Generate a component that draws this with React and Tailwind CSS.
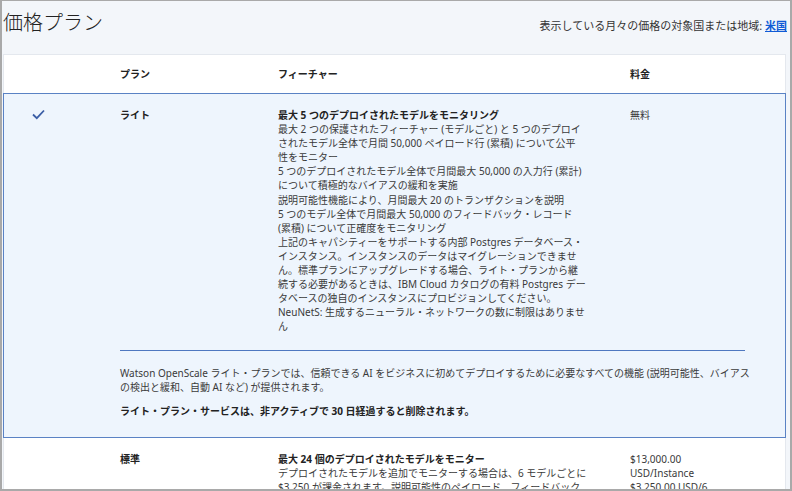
import React from "react";

const features = [
  ["最大 2 つの保護されたフィーチャー (モデルごと) と 5 つのデプロイ", "されたモデル全体で月間 50,000 ペイロード行 (累積) について公平", "性をモニター"],
  ["5 つのデプロイされたモデル全体で月間最大 50,000 の入力行 (累計)", "について積極的なバイアスの緩和を実施"],
  ["説明可能性機能により、月間最大 20 のトランザクションを説明"],
  ["5 つのモデル全体で月間最大 50,000 のフィードバック・レコード", "(累積) について正確度をモニタリング"],
  ["上記のキャパシティーをサポートする内部 Postgres データベース・", "インスタンス。インスタンスのデータはマイグレーションできませ", "ん。標準プランにアップグレードする場合、ライト・プランから継", "続する必要があるときは、IBM Cloud カタログの有料 Postgres デー", "タベースの独自のインスタンスにプロビジョンしてください。"],
  ["NeuNetS: 生成するニューラル・ネットワークの数に制限はありませ", "ん"],
];

function Lines({ lines }) {
  return lines.map((l, i) => (
    <div key={i} className="whitespace-nowrap">{l}</div>
  ));
}

export default function App() {
  return (
    <div className="w-[792px] h-[491px] overflow-hidden bg-[#f3f6fa] border-l-2 border-t border-r-2 border-b-2 border-[#a9a9a9] text-[#3a3a3a] font-['Noto_Sans','Noto_Sans_CJK_JP',sans-serif]">
      <div className="flex items-start justify-between h-[53px]">
        <h1 className="pl-[1px] pt-[8px] text-[20px] leading-[28px] font-light text-[#222]">価格プラン</h1>
        <div className="pt-[17px] pr-[3px] text-[11px] leading-[16px] text-[#333]">
          表示している月々の価格の対象国または地域: <a className="text-[#0f5bd6] underline font-semibold">米国</a>
        </div>
      </div>
      <div className="ml-[1px] mr-[4px] bg-white border border-[#e4e8ee] text-[10px] leading-[14.1px]">
        <div className="grid grid-cols-[116px_158px_352px_1fr] h-[38px] items-center font-bold text-[#222] text-[10px]">
          <div></div>
          <div>プラン</div>
          <div>フィーチャー</div>
          <div>料金</div>
        </div>
        <div className="-mx-px border border-[#5a82c4] bg-[#eef5fd] pt-[14px] pb-[19px]">
          <div className="grid grid-cols-[116px_158px_352px_1fr]">
            <div className="pl-[28px] pt-[1px]">
              <svg width="13" height="11" viewBox="0 0 13 11" fill="none">
                <path d="M1 5.5 L4.8 9.2 L12 1.5" stroke="#3b5ea6" strokeWidth="1.8" />
              </svg>
            </div>
            <div className="font-bold text-[#222]">ライト</div>
            <div>
              <div className="font-bold text-[#222] whitespace-nowrap">最大 5 つのデプロイされたモデルをモニタリング</div>
              {features.map((f, i) => (
                <Lines key={i} lines={f} />
              ))}
            </div>
            <div>無料</div>
          </div>
          <div className="ml-[116px] mr-[40px] mt-[16px] border-t border-[#4f78c0]"></div>
          <div className="ml-[116px] mt-[15px]">
            <div className="whitespace-nowrap">Watson OpenScale ライト・プランでは、信頼できる AI をビジネスに初めてデプロイするために必要なすべての機能 (説明可能性、バイアス</div>
            <div className="whitespace-nowrap">の検出と緩和、自動 AI など) が提供されます。</div>
            <div className="mt-[10px] font-bold text-[#222] whitespace-nowrap">ライト・プラン・サービスは、非アクティブで 30 日経過すると削除されます。</div>
          </div>
        </div>
        <div className="grid grid-cols-[116px_158px_352px_1fr] pt-[14px]">
          <div></div>
          <div className="font-bold text-[#222]">標準</div>
          <div>
            <div className="font-bold text-[#222] whitespace-nowrap">最大 24 個のデプロイされたモデルをモニター</div>
            <div className="whitespace-nowrap">デプロイされたモデルを追加でモニターする場合は、6 モデルごとに</div>
            <div className="whitespace-nowrap">$3,250 が課金されます。説明可能性のペイロード、フィードバック</div>
          </div>
          <div>
            <div>$13,000.00</div>
            <div>USD/Instance</div>
            <div>$3,250.00 USD/6</div>
          </div>
        </div>
      </div>
    </div>
  );
}
